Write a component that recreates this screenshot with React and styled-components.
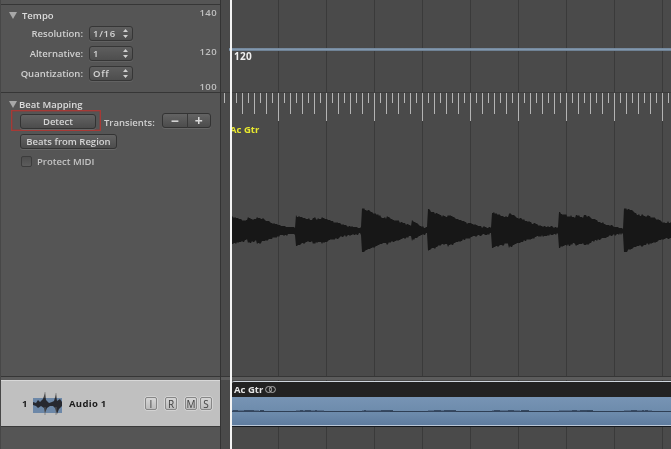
import React from "react";
import styled, { createGlobalStyle } from "styled-components";

const Global = createGlobalStyle`
  html, body { margin: 0; padding: 0; background: #4a4a4a; }
  body { font-family: "Open Sans", "DejaVu Sans", sans-serif; }
`;

const Page = styled.div`
  width: 671px;
  height: 449px;
  overflow: hidden;
  display: grid;
  grid-template-columns: 221px 450px;
  filter: blur(0.3px);
`;

const LeftColumn = styled.div`
  display: flex;
  flex-direction: column;
  background: #555;
  border-left: 1px solid #474747;
  border-right: 1px solid #333;
  box-sizing: border-box;
`;

const Inspector = styled.div`
  height: 376px;
  flex: none;
  box-sizing: border-box;
  padding-top: 4px;
`;

const Section = styled.section`
  border-top: 1px solid #363636;
`;

const TempoSection = styled(Section)`
  height: 88px;
  box-sizing: border-box;
  display: flex;
  justify-content: space-between;
`;

const Title = styled.div`
  display: flex;
  align-items: center;
  gap: ${(p) => p.$gap}px;
  padding-left: 8px;
  height: 12px;
  font-size: 9.5px;
  font-weight: 600;
  color: #dcdcdc;
`;

const Form = styled.div`
  padding-top: 4px;
`;

const FormGrid = styled.div`
  display: grid;
  grid-template-columns: 82px 44px;
  column-gap: 6px;
  row-gap: 5px;
  margin-top: 5px;
  align-items: center;
`;

const Label = styled.label`
  text-align: right;
  font-size: 9.5px;
  font-weight: 600;
  color: #d0d0d0;
  white-space: nowrap;
`;

const Selector = styled.div`
  height: 15px;
  box-sizing: border-box;
  border: 1px solid #363636;
  border-radius: 3px;
  background: linear-gradient(#5e5e5e, #4e4e4e);
  box-shadow: 0 1px 0 #626262;
  display: flex;
  align-items: center;
  justify-content: space-between;
  padding: 0 4px 0 3px;
  font-size: 9.5px;
  font-weight: 600;
  color: #d4d4d4;
  letter-spacing: 0.7px;
`;

const Scale = styled.div`
  width: 36px;
  padding: 1px 3px 0 0;
  display: grid;
  grid-template-rows: 39px 35px 13px;
  text-align: right;
  font-size: 9.5px;
  font-weight: 600;
  color: #c0c0c0;
  line-height: 13px;
  letter-spacing: 0.4px;
`;

const BeatSection = styled(Section)`
  padding-top: 5px;
`;

const ButtonRow = styled.div`
  display: flex;
  align-items: center;
  margin-left: 10px;
`;

const Highlight = styled.div`
  width: 90px;
  height: 21px;
  box-sizing: border-box;
  border: 1px solid #a63a36;
  box-shadow: inset 0 0 0 0.5px #8f3d3a;
  display: flex;
  align-items: center;
  padding: 1px 0 0 8px;
`;

const Button = styled.button`
  height: 15px;
  width: ${(p) => p.$w}px;
  box-sizing: border-box;
  padding: 0;
  border: 1px solid #333;
  border-radius: 3px;
  background: linear-gradient(#636363, #4c4c4c);
  box-shadow: 0 1px 0 #666;
  font-family: inherit;
  font-size: 9.5px;
  font-weight: 600;
  color: #d4d4d4;
  white-space: nowrap;
`;

const TransientsLabel = styled(Label)`
  margin: 3px 7px 0 3px;
  width: 51px;
  text-align: left;
`;

const Stepper = styled.div`
  width: 49px;
  height: 15px;
  box-sizing: border-box;
  border: 1px solid #333;
  border-radius: 3px;
  background: linear-gradient(#636363, #4c4c4c);
  box-shadow: 0 1px 0 #666;
  display: grid;
  grid-template-columns: 1fr 1fr;
`;

const StepCell = styled.div`
  display: flex;
  align-items: center;
  justify-content: center;
  color: #d8d8d8;
  font-size: 14px;
  font-weight: 700;
  line-height: 1;
  border-left: ${(p) => (p.$divided ? "1px solid #383838" : "none")};
`;

const RegionButtonRow = styled.div`
  display: flex;
  margin: 3px 0 0 19px;
`;

const CheckRow = styled.div`
  display: flex;
  align-items: center;
  gap: 5px;
  margin: 6px 0 0 20px;
`;

const Checkbox = styled.div`
  width: 11px;
  height: 11px;
  border: 1px solid #3c3c3c;
  border-radius: 2px;
  box-sizing: border-box;
  background: linear-gradient(#4e4e4e, #5c5c5c);
`;

const CheckLabel = styled(Label)`
  color: #c4c4c4;
`;

const SplitBar = styled.div`
  height: 4px;
  flex: none;
  background: #5c5c5c;
  border-top: 1px solid #363636;
  box-sizing: border-box;
`;

const TrackHeader = styled.div`
  height: 47px;
  flex: none;
  box-sizing: border-box;
  background: #c0c0c0;
  border-top: 1px solid #d8d8d8;
  border-bottom: 1px solid #3a3a3a;
  display: flex;
  align-items: center;
  color: #1c1c1c;
  font-size: 9.5px;
  font-weight: 700;
  padding-left: 21px;
`;

const TrackNumber = styled.span`
  width: 11px;
`;

const TrackName = styled.span`
  margin-left: 6px;
  width: 76px;
  letter-spacing: 0.3px;
`;

const TrackButton = styled.div`
  width: 12px;
  height: 13px;
  box-sizing: border-box;
  margin-right: ${(p) => p.$mr}px;
  border: 1px solid #868686;
  border-radius: 2px;
  background: linear-gradient(#d6d6d6, #bcbcbc);
  box-shadow: 0 0 0 0.5px #e6e6e6;
  display: flex;
  align-items: center;
  justify-content: center;
  font-size: 10px;
  font-weight: 500;
  color: #404040;
`;

const RightColumn = styled.div`
  position: relative;
  display: flex;
  flex-direction: column;
  background-color: #4a4a4a;
  background-image: linear-gradient(to right, #3a3a3a 1px, transparent 1px);
  background-size: 48px 100%;
  background-position: 9px 0;
`;

const Timeline = styled.div`
  height: 376px;
  flex: none;
`;

const TempoLane = styled.div`
  height: 92px;
  box-sizing: border-box;
  padding-top: 48px;
`;

const TempoLine = styled.div`
  height: 3px;
  margin-left: 8px;
  background: linear-gradient(#6f8296, #8298ae 50%, #667788);
`;

const TempoValue = styled.div`
  margin: -1px 0 0 13px;
  font-size: 10px;
  font-weight: 700;
  line-height: 13px;
  color: #f0f0f0;
  letter-spacing: 0.3px;
`;

const RulerSvg = styled.svg`
  display: block;
`;

const RegionLabel = styled.div`
  margin: 1px 0 0 9px;
  font-size: 9.5px;
  font-weight: 700;
  line-height: 13px;
  color: #e9e92e;
  white-space: nowrap;
`;

const WaveSvg = styled.svg`
  display: block;
  margin-top: 65px;
`;

const Lane = styled.div`
  height: 47px;
  flex: none;
  padding: 1px 0 0 10px;
  box-sizing: border-box;
`;

const Region = styled.div`
  height: 46px;
  box-sizing: border-box;
  border-top: 1px solid #cfd6de;
  border-bottom: 1px solid #14181f;
  border-top-left-radius: 4px;
  overflow: hidden;
  display: flex;
  flex-direction: column;
`;

const RegionHeader = styled.div`
  height: 15px;
  flex: none;
  background: #222;
  color: #e4e4e4;
  font-size: 9.5px;
  font-weight: 700;
  display: flex;
  align-items: center;
  gap: 2px;
  padding-left: 3px;
`;

const RegionBody = styled.div`
  flex: 1;
  background: linear-gradient(#7794b4, #6c8aab 60%, #5f7c9f);
  border-bottom: 1px solid #b9c6d6;
`;

const Playhead = styled.div`
  position: absolute;
  top: 0;
  bottom: 0;
  left: 9px;
  width: 2px;
  background: #f4f4f4;
`;

const Triangle = () => (
  <svg width="8" height="7" viewBox="0 0 8 7">
    <path d="M0 0H8L4 7Z" fill="#a8a8a8" />
  </svg>
);

const Arrows = () => (
  <svg width="5" height="9" viewBox="0 0 5 9">
    <path d="M2.5 0L5 3H0Z M2.5 9L0 6H5Z" fill="#d0d0d0" />
  </svg>
);

const Ruler = () => {
  const ticks = [];
  for (let k = 0; k < 76; k++) {
    const x = 3 + 6 * k;
    const long = k % 8 === 1;
    const med = k % 2 === 1;
    ticks.push(<rect key={k} x={x} y="1" width="1" height={long ? 28 : med ? 21 : 10} fill="#b4b4b4" />);
  }
  return (
    <RulerSvg width="450" height="30" viewBox="0 0 450 30">
      <rect width="450" height="1" fill="#3c3c3c" />
      {ticks}
    </RulerSvg>
  );
};

const NOTES = [
  { s: 231, e: 296, top: [[0, 14], [17, 13], [26, 14]] },
  { s: 296, e: 362, top: [[0, 15], [17, 13], [26, 13]] },
  { s: 362, e: 428, top: [[0, 23], [3, 17], [8, 10], [25, 14], [50, 10]] },
  { s: 428, e: 492, top: [[0, 21], [3, 17], [10, 15], [20, 16], [32, 9]] },
  { s: 492, e: 559, top: [[0, 18], [10, 15], [17, 17], [27, 12]] },
  { s: 559, e: 624, top: [[0, 18], [10, 15], [17, 16], [25, 16]] },
  { s: 624, e: 690, top: [[0, 23], [3, 17], [12, 16], [18, 16], [24, 15], [44, 9]] },
];

const noise = (x) => {
  const v = Math.sin(x * 12.9898) * 43758.5453;
  return v - Math.floor(v);
};

const envelope = (x) => {
  const n = NOTES.find((d) => x >= d.s && x < d.e) || NOTES[NOTES.length - 1];
  let a = 2.8;
  n.top.forEach(([o, h]) => {
    const bx = n.s + o;
    if (x < bx) return;
    const t = (x - bx) / (n.e - bx);
    a = Math.max(a, 2.8 + (h - 2.8) * Math.pow(1 - t, 1.7));
  });
  return a + (noise(x) - 0.5) * 2;
};

const Waveform = () => {
  const cy = 29.5;
  const upper = [];
  const lower = [];
  for (let x = 231; x <= 671; x++) {
    const a = envelope(x);
    const b = envelope(x + 0.37);
    const px = x - 221;
    upper.push(`${px} ${Math.round(cy - a)}`);
    lower.unshift(`${px} ${Math.round(cy + 1 + b * 0.92)}`);
  }
  return (
    <WaveSvg width="450" height="60" viewBox="0 0 450 60">
      <path d={`M${upper.join("L")}L${lower.join("L")}Z`} fill="#171717" />
    </WaveSvg>
  );
};

const ThumbIcon = () => (
  <svg width="30" height="24" viewBox="0 0 30 24" style={{ flex: "none" }}>
    <rect y="6" width="29" height="15" fill="#6d88a8" />
    <path
      d="M0 10L3 11L5 8L7 10L10 7L12 1L13 8L16 11L19 10L21 9L23 2L24 9L27 7L29 10L29 14L26 17L24 22L22 16L20 14L17 14L14 16L12 21L11 16L8 14L5 16L3 14L0 13Z"
      fill="#1f1f22"
      opacity="0.9"
    />
    <path d="M12 0V6M23 1V6M12 15V23M23 15V23" stroke="#707070" strokeWidth="0.7" />
  </svg>
);

const StereoIcon = () => (
  <svg width="11" height="7" viewBox="0 0 11 7">
    <circle cx="3.6" cy="3.5" r="3" fill="none" stroke="#bcbcbc" strokeWidth="0.9" />
    <circle cx="7.4" cy="3.5" r="3" fill="none" stroke="#bcbcbc" strokeWidth="0.9" />
  </svg>
);

const MiniWave = () => {
  const onsets = [0, 65, 131, 197, 261, 328, 393];
  const bits = [];
  onsets.forEach((o) => {
    for (let i = 0; i < 5; i++) {
      const x = o + 2 + Math.floor(noise(o + i) * 30);
      bits.push(<rect key={`${o}-${i}`} x={x} y="13" width={2 + Math.floor(noise(x) * 5)} height="1" fill="#33465e" />);
    }
    bits.push(<rect key={o} x={o} y="13.5" width="28" height="1" fill="#3a4d66" />);
  });
  return (
    <svg width="440" height="28" viewBox="0 0 440 28" style={{ display: "block" }}>
      <rect y="14" width="440" height="1" fill="#2f3f55" />
      {bits}
    </svg>
  );
};

export default function App() {
  return (
    <>
      <Global />
      <Page>
        <LeftColumn>
          <Inspector>
            <TempoSection>
              <Form>
                <Title $gap={5}>
                  <Triangle />
                  <span>Tempo</span>
                </Title>
                <FormGrid>
                  <Label>Resolution:</Label>
                  <Selector>1/16<Arrows /></Selector>
                  <Label>Alternative:</Label>
                  <Selector>1<Arrows /></Selector>
                  <Label>Quantization:</Label>
                  <Selector>Off<Arrows /></Selector>
                </FormGrid>
              </Form>
              <Scale>
                <span>140</span>
                <span>120</span>
                <span>100</span>
              </Scale>
            </TempoSection>
            <BeatSection>
              <Title $gap={2}>
                <Triangle />
                <span>Beat Mapping</span>
              </Title>
              <ButtonRow>
                <Highlight>
                  <Button $w={76}>Detect</Button>
                </Highlight>
                <TransientsLabel>Transients:</TransientsLabel>
                <Stepper>
                  <StepCell>−</StepCell>
                  <StepCell $divided>+</StepCell>
                </Stepper>
              </ButtonRow>
              <RegionButtonRow>
                <Button $w={97}>Beats from Region</Button>
              </RegionButtonRow>
              <CheckRow>
                <Checkbox />
                <CheckLabel>Protect MIDI</CheckLabel>
              </CheckRow>
            </BeatSection>
          </Inspector>
          <SplitBar />
          <TrackHeader>
            <TrackNumber>1</TrackNumber>
            <ThumbIcon />
            <TrackName>Audio 1</TrackName>
            <TrackButton $mr={8}>I</TrackButton>
            <TrackButton $mr={8}>R</TrackButton>
            <TrackButton $mr={3}>M</TrackButton>
            <TrackButton $mr={0}>S</TrackButton>
          </TrackHeader>
        </LeftColumn>
        <RightColumn>
          <Timeline>
            <TempoLane>
              <TempoLine />
              <TempoValue>120</TempoValue>
            </TempoLane>
            <Ruler />
            <RegionLabel>Ac Gtr</RegionLabel>
            <Waveform />
          </Timeline>
          <SplitBar />
          <Lane>
            <Region>
              <RegionHeader>
                Ac Gtr <StereoIcon />
              </RegionHeader>
              <RegionBody>
                <MiniWave />
              </RegionBody>
            </Region>
          </Lane>
          <Playhead />
        </RightColumn>
      </Page>
    </>
  );
}
